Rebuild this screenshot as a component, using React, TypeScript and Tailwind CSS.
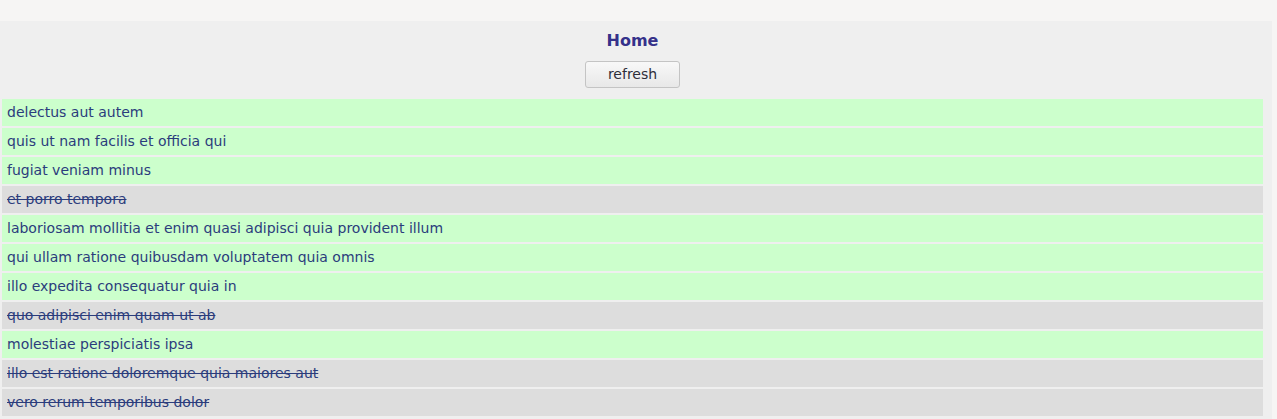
import React from "react";

const todos = [
  { id: 1, title: "delectus aut autem", done: false },
  { id: 2, title: "quis ut nam facilis et officia qui", done: false },
  { id: 3, title: "fugiat veniam minus", done: false },
  { id: 4, title: "et porro tempora", done: true },
  { id: 5, title: "laboriosam mollitia et enim quasi adipisci quia provident illum", done: false },
  { id: 6, title: "qui ullam ratione quibusdam voluptatem quia omnis", done: false },
  { id: 7, title: "illo expedita consequatur quia in", done: false },
  { id: 8, title: "quo adipisci enim quam ut ab", done: true },
  { id: 9, title: "molestiae perspiciatis ipsa", done: false },
  { id: 10, title: "illo est ratione doloremque quia maiores aut", done: true },
  { id: 11, title: "vero rerum temporibus dolor", done: true },
];

export default function App() {
  return (
    <div className="h-[419px] overflow-hidden bg-[#f6f5f4] font-['DejaVu_Sans',sans-serif]">
      <div className="h-[21px]" />
      <div className="mr-[5px] flex h-[398px] flex-col bg-[#efefef] pt-[10px]">
        <div className="w-[1265px]">
          <h1 className="text-center text-[16px] font-bold leading-[19px] text-[#35318a]">Home</h1>
          <div className="mt-[11px] flex justify-center">
            <button className="h-[27px] w-[95px] rounded-[3px] border border-[#c4c4c4] bg-gradient-to-b from-[#f8f8f8] to-[#e8e8e8] text-[14px] text-[#2e2e3a]">
              refresh
            </button>
          </div>
        </div>
        <ul className="mt-[11px] flex w-[1263px] flex-col gap-[2px] pl-[2px]">
          {todos.map((t) => (
            <li
              key={t.id}
              className={`flex h-[27px] items-center pl-[5px] text-[14px] text-[#2b3c7c] ${
                t.done ? "bg-[#dddddd] line-through" : "bg-[#ccffcc]"
              }`}
            >
              {t.title}
            </li>
          ))}
        </ul>
      </div>
    </div>
  );
}
